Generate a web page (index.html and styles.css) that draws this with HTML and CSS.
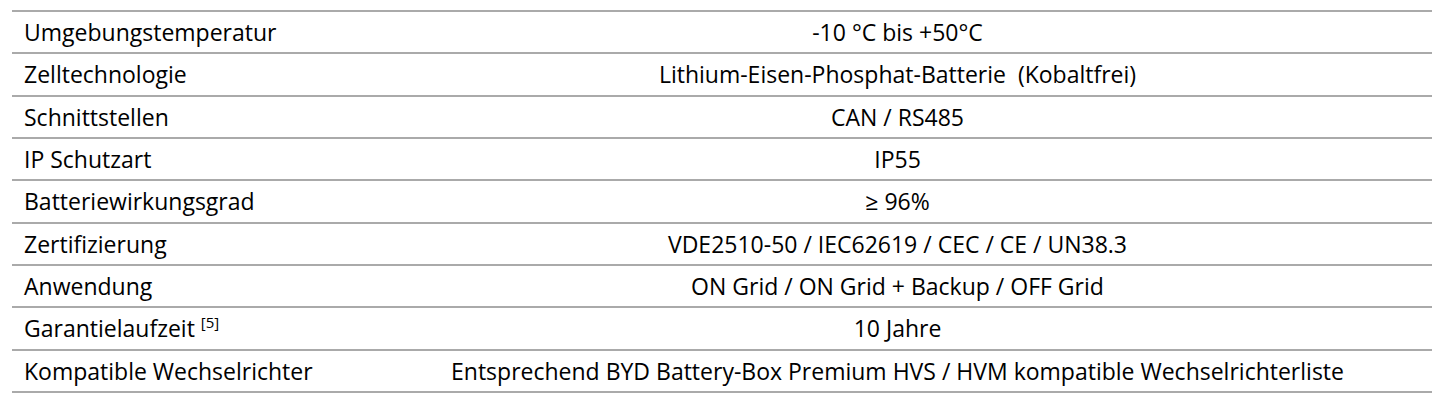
FILE: index.html
```html
<!DOCTYPE html>
<html lang="de">
<head>
<meta charset="utf-8">
<link rel="stylesheet" href="styles.css">
</head>
<body>
<table class="spec">
<colgroup><col class="c-label"><col class="c-value"></colgroup>
<tbody>
<tr><td class="label">Umgebungstemperatur</td><td class="value">-10 °C bis +50°C</td></tr>
<tr><td class="label">Zelltechnologie</td><td class="value">Lithium-Eisen-Phosphat-Batterie&nbsp; (Kobaltfrei)</td></tr>
<tr><td class="label">Schnittstellen</td><td class="value">CAN / RS485</td></tr>
<tr><td class="label">IP Schutzart</td><td class="value">IP55</td></tr>
<tr><td class="label">Batteriewirkungsgrad</td><td class="value">≥ 96%</td></tr>
<tr><td class="label">Zertifizierung</td><td class="value">VDE2510-50 / IEC62619 / CEC / CE / UN38.3</td></tr>
<tr><td class="label">Anwendung</td><td class="value">ON Grid / ON Grid + Backup / OFF Grid</td></tr>
<tr><td class="label">Garantielaufzeit <sup class="note">[5]</sup></td><td class="value">10 Jahre</td></tr>
<tr><td class="label">Kompatible Wechselrichter</td><td class="value">Entsprechend BYD Battery-Box Premium HVS / HVM kompatible Wechselrichterliste</td></tr>
</tbody>
</table>
</body>
</html>
```
FILE: styles.css
```css
html, body {
  margin: 0;
  padding: 0;
  background: #ffffff;
}
body {
  padding: 10px 13px 0 12px;
  font-family: "Open Sans", "Noto Sans", sans-serif;
  color: #000000;
}
.spec {
  width: 100%;
  border-collapse: collapse;
  font-size: 23px;
}
.c-label { width: 351px; }
.spec td {
  border-top: 2px solid #aaaaaa;
  border-bottom: 2px solid #aaaaaa;
  height: 40.33px;
  padding: 0 12px;
  line-height: 28px;
  vertical-align: middle;
}
.spec td.value {
  text-align: center;
}
.note {
  font-size: 15px;
  line-height: 0;
  vertical-align: 9px;
}
```
